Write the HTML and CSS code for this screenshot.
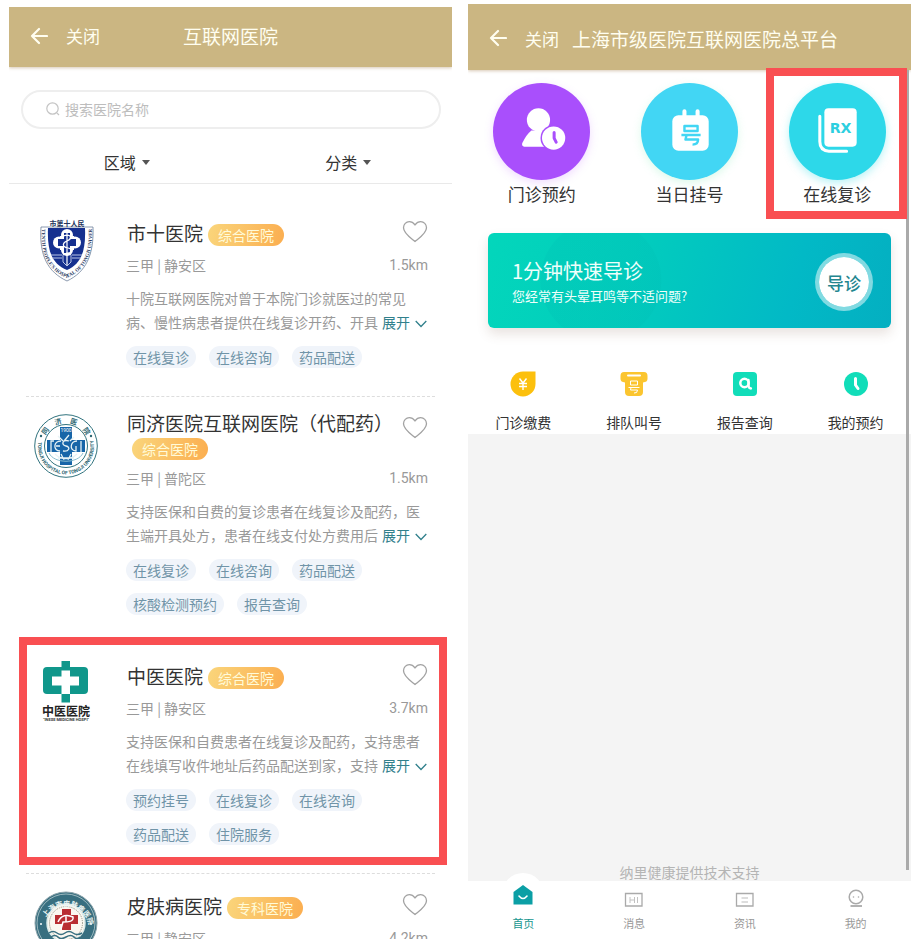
FILE: index.html
```html
<!DOCTYPE html>
<html lang="zh-CN">
<head>
<meta charset="utf-8">
<meta name="viewport" content="width=device-width, initial-scale=1">
<title>互联网医院</title>
<link rel="stylesheet" href="styles.css">
</head>
<body>
<svg class="defs" aria-hidden="true">
  <symbol id="back" viewBox="0 0 18 18"><path d="M17 9H2M9 2L2 9l7 7" fill="none" stroke="currentColor" stroke-width="2.2" stroke-linecap="round" stroke-linejoin="round"/></symbol>
  <symbol id="heart" viewBox="0 0 26 24"><path d="M13 21.5C9.500 18.500 1.500 13.500 1.500 7.800C1.500 4.200 4.200 1.700 7.300 1.700C9.700 1.700 11.800 3.200 13 4.800C14.200 3.200 16.300 1.700 18.700 1.700C21.800 1.700 24.500 4.200 24.500 7.800C24.500 13.500 16.500 18.500 13 21.500Z" fill="none" stroke="#a2a2a2" stroke-width="1.3"/></symbol>
  <symbol id="chevron" viewBox="0 0 12 8"><path d="M0.700 1L6 6.500L11.300 1" fill="none" stroke="currentColor" stroke-width="1.3"/></symbol>
</svg>

<div class="screen screen--list">
  <header class="bar">
    <button class="bar-back" type="button" aria-label="返回"><svg viewBox="0 0 18 18"><use href="#back"/></svg></button>
    <button class="bar-close" type="button">关闭</button>
    <h1 class="bar-title bar-title--center">互联网医院</h1>
  </header>

  <label class="search">
    <svg viewBox="0 0 14 14"><circle cx="6.500" cy="6.500" r="5.700"/><path d="M10.800 10.800L13 13"/></svg>
    <input type="search" placeholder="搜索医院名称" aria-label="搜索医院名称">
  </label>

  <div class="filters">
    <button type="button">区域<i class="caret"></i></button>
    <button type="button">分类<i class="caret"></i></button>
  </div>

  <main class="list">
    <article class="item">
      <svg class="logo" viewBox="0 0 64 64" role="img" aria-label="市第十人民医院">
        <defs><path id="shieldArc" d="M8 10C6 37 14 52 33 60C51 52 59 38 58 10"/></defs>
        <path d="M7 9H59C60 37 52 54 33 63C14 54 5 38 7 9Z" fill="#fff" stroke="#5a6e8c" stroke-width="0.700"/>
        <path d="M14 10H51C52 33 47 46 33 52C18 46 13 33 14 10Z" fill="#16308f"/>
        <text x="33" y="8" text-anchor="middle" font-size="7" font-weight="700" fill="#24345c">市第十人民</text>
        <text font-size="5" font-weight="700" fill="#24345c" class="serif"><textPath href="#shieldArc" startOffset="1">TENTH PEOPLE'S HOSPITAL OF TONGJI UNIVERSITY</textPath></text>
        <g fill="#fff"><circle cx="33" cy="17" r="6"/><circle cx="33" cy="32" r="6"/><circle cx="25" cy="24.500" r="6"/><circle cx="41" cy="24.500" r="6"/><path d="M26 18h14v14H26z"/></g>
        <path d="M30 15h6v6h6v7h-6v7h-6v-7h-6v-7h6z" fill="#16308f"/>
        <path d="M33 14V47M29 18c9-3 9 3 4 5s-5 6 1 7s3 6-2 5" fill="none" stroke="#fff" stroke-width="1.200"/>
        <path d="M17 37h11m10 0h10M18 40h10m10 0h9M29 37v7l4 4l4-4v-7" fill="none" stroke="#b9c5e6" stroke-width="1"/>
      </svg>
      <div class="info">
        <h2 class="name">市十医院<span class="badge">综合医院</span></h2>
        <p class="meta"><span>三甲 | 静安区</span><span class="km">1.5km</span></p>
        <p class="desc">十院互联网医院对曾于本院门诊就医过的常见病、慢性病患者提供在线复诊开药、开具<button class="more" type="button">展开<svg viewBox="0 0 12 8"><use href="#chevron"/></svg></button></p>
        <ul class="tags"><li>在线复诊</li><li>在线咨询</li><li>药品配送</li></ul>
      </div>
      <button class="fav" type="button" aria-label="收藏"><svg viewBox="0 0 26 24"><use href="#heart"/></svg></button>
    </article>

    <article class="item">
      <svg class="logo" viewBox="0 0 64 64" role="img" aria-label="同济医院">
        <defs><path id="tjBottom" d="M5 25A28 28 0 1 0 59 25"/></defs>
        <circle cx="32" cy="32" r="31.300" fill="#fff" stroke="#31737e" stroke-width="1"/>
        <circle cx="32" cy="32" r="21.500" fill="#fff" stroke="#31737e" stroke-width="1"/>
        <g font-size="7" font-weight="700" fill="#2b6672" text-anchor="middle">
          <text transform="rotate(-54 32 32)" x="32" y="9">同</text>
          <text transform="rotate(-18 32 32)" x="32" y="9">济</text>
          <text transform="rotate(18 32 32)" x="32" y="9">医</text>
          <text transform="rotate(54 32 32)" x="32" y="9">院</text>
        </g>
        <text font-size="5" font-weight="700" fill="#2b6672" class="sans"><textPath href="#tjBottom" startOffset="3">TONGJI HOSPITAL OF TONGJI UNIVERSITY</textPath></text>
        <circle cx="7" cy="22" r="1.200" fill="#2b6672"/><circle cx="57" cy="22" r="1.200" fill="#2b6672"/>
        <path d="M26 13h12v13h13v12H38v13H26V38H13V26h13z" fill="#1765a8"/>
        <text x="32" y="18" text-anchor="middle" font-size="5" fill="#fff" class="sans">1900</text>
        <g fill="none" stroke="#e7f3f6" stroke-width="1.300"><path d="M20 27h-3v11M27 27c-8 0-8 10-1 10m0-5h-4M35 27c-7-2-8 4-3 5s3 6-3 5M43 27c-7 0-8 10-1 10v-5M47 27v11M21 40c6 6 16 6 22 0M24 22l5 5m6-6l-5 6m10-4l-4 4M27 40l3 6m7-6l-3 6M24 44h16"/></g>
        <path d="M15 39c5 11 29 11 34 0" fill="none" stroke="#8bbfd0" stroke-width="1"/>
      </svg>
      <div class="info">
        <h2 class="name name--long">同济医院互联网医院（代配药）<span class="badge">综合医院</span></h2>
        <p class="meta"><span>三甲 | 普陀区</span><span class="km">1.5km</span></p>
        <p class="desc">支持医保和自费的复诊患者在线复诊及配药，医生端开具处方，患者在线支付处方费用后<button class="more" type="button">展开<svg viewBox="0 0 12 8"><use href="#chevron"/></svg></button></p>
        <ul class="tags"><li>在线复诊</li><li>在线咨询</li><li>药品配送</li><li>核酸检测预约</li><li>报告查询</li></ul>
      </div>
      <button class="fav" type="button" aria-label="收藏"><svg viewBox="0 0 26 24"><use href="#heart"/></svg></button>
    </article>

    <article class="item item--marked">
      <svg class="logo" viewBox="0 0 64 64" role="img" aria-label="中医医院">
        <rect x="9" y="6" width="45" height="27" rx="4" fill="#10978b"/>
        <path d="M27.500 9.500h8.500v6h9v9h-9V33h-8.500v-8.500H18v-9h9.500z" fill="#fff"/>
        <path d="M27.500 0H36v6h-8.500zM27.500 33H36v8.500h-8.500z" fill="#10978b"/>
        <text x="32" y="55" text-anchor="middle" font-size="12" font-weight="700" fill="#222">中医医院</text>
        <text x="32" y="60" text-anchor="middle" font-size="4" font-weight="700" fill="#333" class="sans">"INESE MEDICINE HOSPI"</text>
      </svg>
      <div class="info">
        <h2 class="name">中医医院<span class="badge">综合医院</span></h2>
        <p class="meta"><span>三甲 | 静安区</span><span class="km">3.7km</span></p>
        <p class="desc">支持医保和自费患者在线复诊及配药，支持患者在线填写收件地址后药品配送到家，支持<button class="more" type="button">展开<svg viewBox="0 0 12 8"><use href="#chevron"/></svg></button></p>
        <ul class="tags"><li>预约挂号</li><li>在线复诊</li><li>在线咨询</li><li>药品配送</li><li>住院服务</li></ul>
      </div>
      <button class="fav" type="button" aria-label="收藏"><svg viewBox="0 0 26 24"><use href="#heart"/></svg></button>
    </article>

    <article class="item">
      <svg class="logo" viewBox="0 0 64 64" role="img" aria-label="上海市皮肤病医院">
        <defs><path id="pfTop" d="M9 38A23 23 0 1 1 55 38"/></defs>
        <circle cx="32" cy="32" r="31" fill="#386f80" stroke="#8fa5ac" stroke-width="1"/>
        <circle cx="32" cy="32" r="29" fill="none" stroke="#c9d8da" stroke-width="0.700"/>
        <circle cx="32" cy="32" r="19" fill="#fbf7f0" stroke="#dcebe8" stroke-width="1.500"/>
        <circle cx="32" cy="32" r="16.500" fill="none" stroke="#8b8f80" stroke-width="1" stroke-dasharray="1 1"/>
        <text font-size="7" font-weight="700" fill="#eff7f5"><textPath href="#pfTop" startOffset="12">上海市皮肤病医院</textPath></text>
        <path d="M28 18h9v6h7v9h-7v6h-9v-6h-7v-9h7z" fill="#b92e32"/>
        <path d="M24 31c3-7 9-8 15-5c1 5-6 5-10 5l-2 7M32 24v7" fill="none" stroke="#fff" stroke-width="1.500"/>
        <path d="M15 42q4-3 8 0t8 0t8 0t9 0M17 46q4-3 7 0t8 0t8 0t6 0" fill="none" stroke="#386f80" stroke-width="1.500"/>
        <circle cx="7" cy="33" r="1" fill="#fff"/><circle cx="57" cy="33" r="1" fill="#fff"/>
      </svg>
      <div class="info">
        <h2 class="name">皮肤病医院<span class="badge">专科医院</span></h2>
        <p class="meta"><span>三甲 | 静安区</span><span class="km">4.2km</span></p>
      </div>
      <button class="fav" type="button" aria-label="收藏"><svg viewBox="0 0 26 24"><use href="#heart"/></svg></button>
    </article>
  </main>
</div>

<div class="screen screen--home">
  <header class="bar bar--tall">
    <button class="bar-back" type="button" aria-label="返回"><svg viewBox="0 0 18 18"><use href="#back"/></svg></button>
    <button class="bar-close" type="button">关闭</button>
    <h1 class="bar-title">上海市级医院互联网医院总平台</h1>
  </header>

  <main class="home">
    <section class="white">
      <nav class="primary">
        <a href="#" class="entry">
          <span class="disc disc--purple"><svg viewBox="0 0 96 96">
            <circle cx="45" cy="36.500" r="11.500" fill="#fff"/>
            <path d="M38 47h14l8 16H31q-3-0.500-2-3.500Q33 51 38 47z" fill="#fff"/>
            <circle cx="60" cy="54.500" r="13" fill="#a94ffc"/><circle cx="60" cy="54.500" r="11.500" fill="#fff"/>
            <path d="M60.500 49v5.500l2 4" fill="none" stroke="#a94ffc" stroke-width="3" stroke-linecap="round" stroke-linejoin="round"/>
          </svg></span>
          <span>门诊预约</span>
        </a>
        <a href="#" class="entry">
          <span class="disc disc--sky"><svg viewBox="0 0 96 96">
            <path d="M43 28v7M56 28v7" stroke="#fff" stroke-width="4" stroke-linecap="round"/>
            <rect x="31" y="32" width="36" height="35" rx="6" fill="#fff"/>
            <path d="M43 42.500h13v5H43zM40 51.500h19M45 52l-1 4h12.500q0 5-5.500 5" fill="none" stroke="#42d6f4" stroke-width="2.400" stroke-linejoin="round"/>
          </svg></span>
          <span>当日挂号</span>
        </a>
        <a href="#" class="entry entry--marked">
          <span class="disc disc--cyan"><svg viewBox="0 0 96 96">
            <rect x="35" y="25" width="32" height="38" rx="4" fill="#fff"/>
            <path d="M30.500 33v25q0 9 9 9.500H57" fill="none" stroke="#fff" stroke-width="3" stroke-linecap="round"/>
            <text x="51" y="49" text-anchor="middle" font-size="14" font-weight="700" fill="#2ccfe0" class="rx">RX</text>
          </svg></span>
          <span>在线复诊</span>
        </a>
      </nav>

      <section class="banner">
        <div>
          <h2>1分钟快速导诊</h2>
          <p>您经常有头晕耳鸣等不适问题?</p>
        </div>
        <button type="button">导诊</button>
      </section>

      <nav class="secondary">
        <a href="#"><svg viewBox="0 0 28 28"><path d="M14 1.500h12.500V14A12.500 12.500 0 1 1 14 1.500z" fill="#fcc00d"/><path d="M10.500 8.500L14 13l3.500-4.500M14 13v7M10 13.500h8M10 16.500h8" fill="none" stroke="#fff" stroke-width="1.400"/></svg>门诊缴费</a>
        <a href="#"><svg viewBox="0 0 28 28"><path d="M4 2h20q3.500 0 3.500 4v3q0 3-4.500 3.500V22q0 4-4 4H9q-4 0-4-4v-9.500Q0.500 12 0.500 9V6q0-4 3.500-4z" fill="#fbc52f"/><path d="M8 5.500h12" stroke="#fff" stroke-width="2" stroke-linecap="round"/><path d="M10.500 11h7v4h-7zM8.500 17.500h11M11 17.500l-0.500 2.500h7q0 3.500-3.500 3" fill="none" stroke="#fff" stroke-width="1"/></svg>排队叫号</a>
        <a href="#"><svg viewBox="0 0 28 28"><rect x="2" y="2" width="24" height="24" rx="4" fill="#11ddb9"/><circle cx="13.500" cy="13" r="4.200" fill="none" stroke="#fff" stroke-width="2.500"/><path d="M17.500 10v5q0 3.500 2.500 3.500" fill="none" stroke="#fff" stroke-width="2.300" stroke-linecap="round"/></svg>报告查询</a>
        <a href="#"><svg viewBox="0 0 28 28"><circle cx="14" cy="14" r="12" fill="#11ddb9"/><path d="M13.500 8.500v6.500l2.500 3.500" fill="none" stroke="#fff" stroke-width="3" stroke-linecap="round" stroke-linejoin="round"/></svg>我的预约</a>
      </nav>
    </section>
    <p class="credit">纳里健康提供技术支持</p>
    <span class="scrollbar"></span>
  </main>

  <nav class="tabs">
    <a href="#" class="active"><svg viewBox="0 0 20 24"><path d="M10 0l9.500 7v12.500H0.500V7z" fill="#0b9fa5"/><path d="M6 11q4 5 8 0" fill="none" stroke="#fff" stroke-width="1.600" stroke-linecap="round"/></svg>首页</a>
    <a href="#"><svg viewBox="0 0 20 20"><path d="M1.500 4.500h16.500v12.500H1.500z" fill="none" stroke="#aaa" stroke-width="1.300"/><path d="M6 8v6M10.500 8v6M6 11h4.500M13.500 8v6" fill="none" stroke="#c2c2c2" stroke-width="1"/></svg>消息</a>
    <a href="#"><svg viewBox="0 0 20 20"><path d="M1.500 4.500h16.500v12.500H1.500z" fill="none" stroke="#aaa" stroke-width="1.300"/><path d="M6.500 9h6.500M6.500 13h6.500" fill="none" stroke="#bbb" stroke-width="1.200"/></svg>资讯</a>
    <a href="#"><svg viewBox="0 0 20 20"><circle cx="10" cy="8" r="6.800" fill="none" stroke="#aaa" stroke-width="1.500"/><path d="M4.500 17h11.500" stroke="#aaa" stroke-width="1.800"/><circle cx="7.500" cy="8" r="0.800" fill="#aaa"/><circle cx="12.500" cy="8" r="0.800" fill="#aaa"/></svg>我的</a>
  </nav>
</div>
</body>
</html>
```
FILE: styles.css
```css
* {
  box-sizing: border-box;
}

body {
  margin: 0;
  height: 100vh;
  padding: 4px 4px 3px 9px;
  display: grid;
  grid-template-columns: 1fr 1fr;
  grid-template-rows: minmax(0, 1fr);
  gap: 16px;
  overflow: hidden;
  background: #fff;
  color: #333;
  font-family: "Noto Sans CJK SC", sans-serif;
  font-size: 14px;
}

h1, h2, p, ul {
  margin: 0;
  padding: 0;
  font-weight: 400;
}

button {
  padding: 0;
  border: 0;
  background: none;
  color: inherit;
  font: inherit;
}

a {
  color: inherit;
  text-decoration: none;
}

.defs {
  position: absolute;
  width: 0;
  height: 0;
}

.sans,
.km {
  font-family: Roboto, sans-serif;
}

.serif {
  font-family: "Liberation Serif", serif;
}

.rx {
  font-family: "DejaVu Sans", sans-serif;
}

.screen {
  display: flex;
  flex-direction: column;
  min-width: 0;
  overflow: hidden;
}

.screen--list {
  margin-top: 3px;
}

/* Header bar */

.bar {
  display: flex;
  flex: none;
  align-items: center;
  position: relative;
  height: 60px;
  padding: 0 0 3px 21px;
  background: #cbb682;
  box-shadow: 0 1px 3px rgba(180, 150, 110, 0.5);
  color: #fffef0;
}

.bar--tall {
  height: 66px;
  padding-top: 5px;
}

.bar-back {
  width: 18px;
  height: 18px;
}

.bar-back svg {
  display: block;
}

.bar-close {
  margin-left: 18px;
  font-size: 17px;
}

.bar-title {
  margin-left: 13px;
  font-size: 19px;
}

.bar-title--center {
  position: absolute;
  left: 0;
  right: 0;
  margin: 0;
  text-align: center;
}

/* Search and filters */

.search {
  display: flex;
  flex: none;
  align-items: center;
  gap: 5px;
  height: 39px;
  margin: 23px 11px 0 12px;
  padding: 0 23px 2px;
  border: 2px solid #eee;
  border-radius: 20px;
}

.search svg {
  width: 14px;
  height: 14px;
  fill: none;
  stroke: #c4c4c4;
  stroke-width: 1.2;
}

.search input {
  flex: 1;
  min-width: 0;
  padding: 0;
  border: 0;
  outline: 0;
  background: none;
  font: inherit;
}

.search input::placeholder {
  color: #bdbdbd;
}

.filters {
  display: grid;
  flex: none;
  grid-template-columns: 1fr 1fr;
  height: 55px;
  padding-top: 12px;
  border-bottom: 1px solid #e9e9e9;
}

.filters button {
  display: flex;
  align-items: center;
  justify-content: center;
  gap: 6px;
  padding-left: 14px;
  font-size: 16px;
}

.caret {
  border: 4px solid transparent;
  border-top: 5px solid #555;
  border-bottom: 0;
}

/* Hospital list */

.list {
  padding: 17px 17px 0;
}

.item {
  display: flex;
  position: relative;
  padding: 12px 7px 28px 8px;
  border-bottom: 1px dashed #ddd;
}

.logo {
  flex: none;
  width: 64px;
  height: 64px;
  margin: 5px 28px 0 0;
}

.info {
  flex: 1;
  min-width: 0;
}

.name {
  display: flex;
  flex-wrap: wrap;
  align-items: center;
  gap: 1px 5px;
  margin-top: 6px;
  padding-left: 1px;
  font-size: 19px;
  line-height: 28px;
}

.name--long {
  margin-top: 0;
}

.name--long .badge {
  margin: 0 0 0 5px;
}

.badge {
  margin-top: 3px;
  padding: 0 10px;
  border-radius: 11px;
  background: linear-gradient(100deg, #fad57b, #fbae50);
  color: #fffbd8;
  font-size: 14px;
  line-height: 22px;
}

.meta {
  display: flex;
  justify-content: space-between;
  margin-top: 6px;
  color: #999;
  line-height: 24px;
}

.desc {
  margin-top: 9px;
  color: #999;
  line-height: 24px;
}

.more {
  margin-left: 4px;
  color: #31808c;
}

.more svg {
  width: 12px;
  height: 8px;
  margin-left: 5px;
}

.tags {
  display: flex;
  flex-wrap: wrap;
  gap: 12px 13px;
  margin-top: 12px;
  list-style: none;
}

.tags li {
  padding: 0 7px;
  border-radius: 11px;
  background: #f0f4fa;
  color: #7094a8;
  line-height: 22px;
}

.fav {
  position: absolute;
  top: 19px;
  right: 7px;
  width: 26px;
  height: 24px;
}

.fav svg {
  display: block;
}

/* Red highlight frames */

.item--marked::after,
.entry--marked::after {
  content: "";
  position: absolute;
  border: 8px solid #f94f52;
  pointer-events: none;
}

.item--marked::after {
  inset: -7px -12px 8px -7px;
}

.entry--marked::after {
  inset: -15px 4px -13px 3px;
  z-index: 1;
}

/* Home screen */

.screen--home {
  position: relative;
}

.home {
  display: flex;
  flex: 1;
  flex-direction: column;
  min-height: 0;
  background: #f4f4f4;
}

.white {
  background: #fff;
}

.primary {
  display: grid;
  grid-template-columns: repeat(3, 1fr);
  padding-top: 13px;
}

.entry {
  display: flex;
  flex-direction: column;
  align-items: center;
  gap: 2px;
  position: relative;
  font-size: 17px;
  line-height: 24px;
}

.disc {
  width: 97px;
  height: 97px;
  border-radius: 50%;
}

.disc svg {
  display: block;
}

.disc--purple {
  background: #a94ffc;
  box-shadow: 0 3px 8px rgba(200, 120, 255, 0.25);
}

.disc--sky {
  background: #42d6f4;
  box-shadow: 0 3px 8px rgba(140, 240, 190, 0.3);
}

.disc--cyan {
  background: #2dd8e9;
  box-shadow: 0 3px 8px rgba(45, 220, 230, 0.35);
}

.banner {
  display: flex;
  align-items: center;
  justify-content: space-between;
  margin: 27px 20px 0;
  padding: 20px 18px 17px 24px;
  border-radius: 6px;
  background:
    radial-gradient(circle at 28% 50%, rgba(0, 190, 180, 0.25) 0 60px, transparent 61px),
    linear-gradient(105deg, #03d6bb, #02cdbd 35%, #02b9c6 75%, #04afc1);
  box-shadow: 0 6px 12px rgba(120, 80, 60, 0.16);
  color: #effffb;
}

.banner h2 {
  font-size: 20px;
  line-height: 28px;
}

.banner p {
  font-size: 13px;
  line-height: 22px;
}

.banner button {
  width: 58px;
  height: 58px;
  border: 4px solid rgba(255, 255, 255, 0.5);
  border-radius: 50%;
  background: #fff;
  background-clip: padding-box;
  color: #23868f;
  font-size: 17px;
  font-weight: 500;
}

.secondary,
.tabs {
  display: grid;
  grid-template-columns: repeat(4, 1fr);
}

.secondary {
  padding: 42px 0 1px;
}

.secondary a {
  display: flex;
  flex-direction: column;
  align-items: center;
  gap: 13px;
  line-height: 22px;
}

.secondary svg {
  width: 28px;
  height: 28px;
}

.credit {
  margin-top: auto;
  color: #b4b4b4;
  line-height: 18px;
  text-align: center;
}

.scrollbar {
  position: absolute;
  top: 66px;
  right: 2px;
  bottom: 69px;
  width: 3px;
  background: #aaa;
}

.tabs {
  position: relative;
  height: 58px;
  background: #fff;
}

.tabs a {
  display: flex;
  flex-direction: column;
  align-items: center;
  justify-content: flex-end;
  gap: 6px;
  padding-bottom: 8px;
  color: #999;
  font-size: 11px;
  line-height: 16px;
}

.tabs svg {
  width: 20px;
  height: 20px;
}

.tabs .active {
  position: relative;
  color: #16968f;
}

.tabs .active svg {
  z-index: 1;
  height: 24px;
}

.tabs .active::before {
  content: "";
  position: absolute;
  top: -8px;
  width: 42px;
  height: 42px;
  border-radius: 50%;
  background: #fff;
}
```
